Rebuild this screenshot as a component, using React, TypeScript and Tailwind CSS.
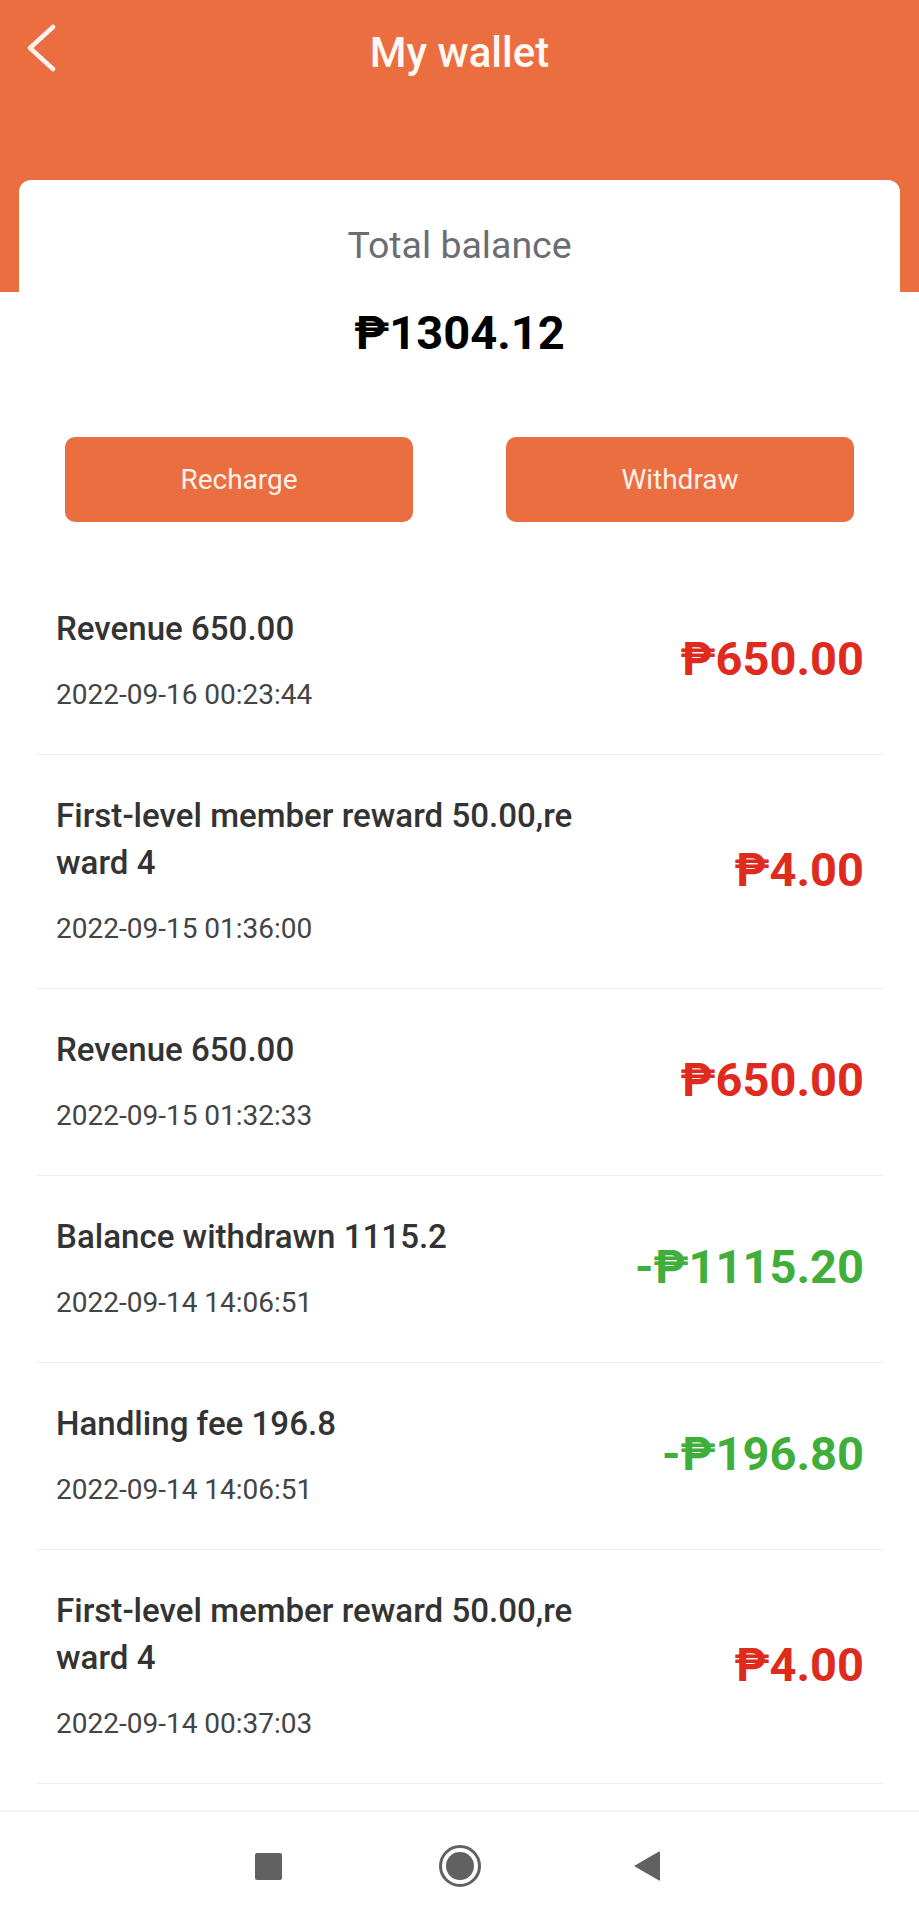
import React from "react";

const rows = [
  { title: "Revenue 650.00", date: "2022-09-16 00:23:44", amount: "₱650.00", positive: true },
  { title: "First-level member reward 50.00,reward 4", date: "2022-09-15 01:36:00", amount: "₱4.00", positive: true },
  { title: "Revenue 650.00", date: "2022-09-15 01:32:33", amount: "₱650.00", positive: true },
  { title: "Balance withdrawn 1115.2", date: "2022-09-14 14:06:51", amount: "-₱1115.20", positive: false },
  { title: "Handling fee 196.8", date: "2022-09-14 14:06:51", amount: "-₱196.80", positive: false },
  { title: "First-level member reward 50.00,reward 4", date: "2022-09-14 00:37:03", amount: "₱4.00", positive: true },
];

export default function App() {
  return (
    <div className="flex h-[1920px] w-[919px] flex-col overflow-hidden bg-white font-['Roboto',sans-serif]">
      <header className="relative h-[292px] shrink-0 bg-[#eb6e40]">
        <svg className="absolute left-[26px] top-[24px]" width="32" height="48" viewBox="0 0 32 48" fill="none">
          <path d="M27 3 L4 24 L27 45" stroke="#fdf3ee" strokeWidth="4.5" strokeLinecap="round" strokeLinejoin="round" />
        </svg>
        <h1 className="pt-[29px] text-center text-[42px] leading-[48px] font-medium text-[#fff8f3]">My wallet</h1>
      </header>

      <section className="relative mx-[19px] -mt-[112px] shrink-0 rounded-t-[12px] bg-white px-[46px] pt-[41px]">
        <p className="text-center text-[37.5px] leading-[48px] text-[#6b6d72]">Total balance</p>
        <p className="mt-[37px] text-center text-[47px] leading-[54px] font-bold text-black">₱1304.12</p>
        <div className="mt-[77px] flex justify-between">
          <button className="h-[85px] w-[348px] rounded-[10px] bg-[#eb6e40] text-[28px] text-[#fdf1ea]">Recharge</button>
          <button className="h-[85px] w-[348px] rounded-[10px] bg-[#eb6e40] text-[28px] text-[#fdf1ea]">Withdraw</button>
        </div>
      </section>

      <main className="ml-[37px] mr-[36px] mt-[46px] flex-1">
        {rows.map((row, i) => (
          <div key={i} className="flex items-center justify-between border-b border-[#eeeeee] pl-[19px] pr-[19px] pt-[37px] pb-[36px]">
            <div className="w-[530px]">
              <p className="break-all text-[33.1px] leading-[47px] font-medium text-[#333333]">{row.title}</p>
              <p className="mt-[19px] text-[28px] leading-[47px] text-[#444444]">{row.date}</p>
            </div>
            <p className={`mb-[5px] text-[47px] leading-[56px] font-bold ${row.positive ? "text-[#de2b1d]" : "text-[#3fae3a]"}`}>
              {row.amount}
            </p>
          </div>
        ))}
      </main>

      <nav className="flex h-[110px] shrink-0 items-center border-t-2 border-[#f4f4f4] bg-white">
        <div className="ml-[255px] h-[27px] w-[27px] rounded-[2px] bg-[#616161]" />
        <svg className="ml-[157px]" width="42" height="42" viewBox="0 0 42 42">
          <circle cx="21" cy="21" r="19.5" fill="none" stroke="#616161" strokeWidth="3" />
          <circle cx="21" cy="21" r="14" fill="#616161" />
        </svg>
        <svg className="ml-[152px]" width="28" height="32" viewBox="0 0 28 32">
          <path d="M1 16 L26 1.5 Q27 1 27 2.5 V29.5 Q27 31 26 30.5 Z" fill="#616161" />
        </svg>
      </nav>
    </div>
  );
}
